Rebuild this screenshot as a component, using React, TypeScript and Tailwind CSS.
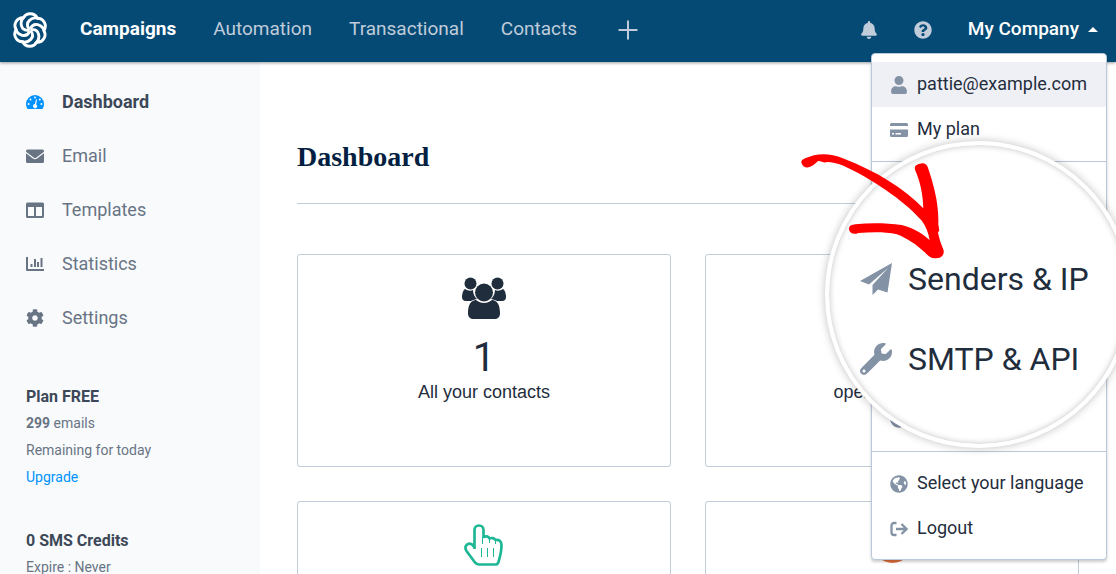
import type { ReactNode } from 'react';
import { FaBell, FaCog, FaGlobeAmericas, FaQuestionCircle, FaUser, FaWrench } from 'react-icons/fa';

const topLinks = ['Automation', 'Transactional', 'Contacts'];

function Logo() {
  return (
    <svg viewBox="-18 -18 36 36" className="size-9" fill="none" stroke="white" strokeWidth="2.9" strokeLinecap="round">
      {[0, 60, 120, 180, 240, 300].map((angle) => (
        <path key={angle} transform={`rotate(${angle})`} d="M-6.6 -12.2 A7.8 7.8 0 0 1 7.2 -12 C1.500 -13 -5.500 -7.500 -1.200 -1.500" />
      ))}
    </svg>
  );
}

function GaugeIcon() {
  return (
    <svg viewBox="0 0 18 18" className="size-[18px]">
      <path d="M9 2a9 9 0 0 1 9 9c0 1.600-.4 3-1 4.300-.3.500-.6.700-1 .7H2c-.4 0-.8-.2-1-.7A9.500 9.500 0 0 1 0 11a9 9 0 0 1 9-9z" fill="currentColor" />
      <g fill="#f9fafc">
        <circle cx="9" cy="4.500" r="1" />
        <circle cx="4.500" cy="6.500" r="1" />
        <circle cx="13.800" cy="6.500" r="1" />
        <circle cx="2.600" cy="11" r="1" />
        <circle cx="15.400" cy="11" r="1" />
        <path d="M10 6.200l1 .3-.8 4.900a2.100 2.100 0 1 1-1.300-.3z" />
      </g>
    </svg>
  );
}

function MailIcon() {
  return (
    <svg viewBox="0 0 18 18" className="size-[18px]" fill="currentColor">
      <path d="M1.500 2.500h15A1.500 1.500 0 0 1 18 4v.8l-7.600 5.700q-1.400 1-2.800 0L0 4.800V4a1.500 1.500 0 0 1 1.500-1.500z" />
      <path d="M0 6.200l6.900 5.200q2.100 1.500 4.200 0L18 6.200v8.300a1.500 1.500 0 0 1-1.500 1.500h-15A1.500 1.500 0 0 1 0 14.500z" />
    </svg>
  );
}

function ColumnsIcon() {
  return (
    <svg viewBox="0 0 18 18" className="size-[18px]" fill="currentColor">
      <path
        fillRule="evenodd"
        d="M1.500 1.500h15A1.500 1.500 0 0 1 18 3v12.500a1.500 1.500 0 0 1-1.500 1.500h-15A1.500 1.500 0 0 1 0 15.500V3a1.500 1.500 0 0 1 1.500-1.500zM2 6v9h6V6zM10 6v9h6V6z"
      />
    </svg>
  );
}

function ChartIcon() {
  return (
    <svg viewBox="0 0 18 18" className="size-[18px]" fill="currentColor">
      <path d="M0 2h2v12h16v2H1a1 1 0 0 1-1-1zM4.500 9h2v3h-2zM8 4h2v8H8zM11 7h2v5h-2zM14.500 3h2v9h-2z" />
    </svg>
  );
}

function CardIcon() {
  return (
    <svg viewBox="0 0 18 18" className="size-[18px]" fill="currentColor">
      <path d="M1.500 2h15A1.500 1.500 0 0 1 18 3.500V5H0V3.500A1.500 1.500 0 0 1 1.500 2z" />
      <path
        fillRule="evenodd"
        d="M0 8.500h18v6a1.500 1.500 0 0 1-1.500 1.500h-15A1.500 1.500 0 0 1 0 14.500zM2 12v1.500h2V12zM5.500 12v1.500H11V12z"
      />
    </svg>
  );
}

function LogoutIcon() {
  return (
    <svg viewBox="0 0 18 18" className="size-[18px]" fill="none" stroke="currentColor" strokeWidth="2.300">
      <path d="M6.500 3H4a2.500 2.500 0 0 0-2.500 2.500v7A2.500 2.500 0 0 0 4 15h2.500" />
      <path d="M6 9h10M11.500 4l5 5-5 5" />
    </svg>
  );
}

function PlaneIcon() {
  return (
    <svg viewBox="0 0 32 32" className="size-8" fill="currentColor">
      <path d="M32 0 27.500 29.500 18 26.500 12.500 32V22L28 5 9 21.500 0 18z" />
    </svg>
  );
}

function PeopleIcon() {
  return (
    <svg viewBox="0 0 44 42" className="h-[42px] w-11" fill="currentColor">
      <circle cx="8.500" cy="6.500" r="6" />
      <circle cx="35.500" cy="6.500" r="6" />
      <path d="M3 12c3 2 6 2 8 1 .3 5 2 7 4 9-3 .5-5 1.500-6 2H4c-3 0-4-2-4-4 0-3 1-7 3-8z" />
      <path d="M41 12c-3 2-6 2-8 1-.3 5-2 7-4 9 3 .5 5 1.500 6 2h5c3 0 4-2 4-4 0-3-1-7-3-8z" />
      <circle cx="22" cy="15.500" r="9" />
      <path d="M14 23c5 4 11 4 16 0 5 0 8 5 8 13 0 4-2 6-6 6H12c-4 0-6-2-6-6 0-8 3-13 8-13z" />
    </svg>
  );
}

function HandIcon() {
  return (
    <svg viewBox="0 0 40 42" className="h-[42px] w-10" fill="none" stroke="#1eb795" strokeWidth="2.700" strokeLinejoin="round">
      <path d="M10.500 25V6a4.500 4.500 0 0 1 9 0v7c2-1 5-1 6 1.500 2-1 5-.5 6 1.500 4-.5 6 1.500 6 5 0 7-1.500 12-3 17-.5 1.500-1.500 2.500-3 2.500H15c-2 0-3-1-4-2L2.500 27C-.5 22 4 18 8 20.500l2.500 3" />
      <path strokeWidth="1" d="M18.500 13v7M25.500 15v4M31.500 16v4M17.500 24v9M23.500 24v9M29.500 24v9" />
    </svg>
  );
}

function MenuItem({ icon, label, active }: { icon: ReactNode; label: string; active?: boolean }) {
  return (
    <a
      href="#"
      className={`flex h-[45px] items-center gap-[9px] px-[18px] text-[18px] whitespace-nowrap text-[#1f2d3d] ${active ? 'bg-[#eff0f6]' : ''}`}
    >
      <span className="text-[#8492a6]">{icon}</span>
      <span className="pb-[2px]">{label}</span>
    </a>
  );
}

function SideItem({ icon, label, active }: { icon: ReactNode; label: string; active?: boolean }) {
  return (
    <a href="#" className="flex h-[54px] items-center gap-[18px] text-[18px] text-[#687484]">
      <span className={active ? 'text-[#0092ff]' : ''}>{icon}</span>
      <span className={active ? 'pb-px font-bold text-[#3c4858]' : 'pb-px'}>{label}</span>
    </a>
  );
}

function StatCard({ children }: { children: ReactNode }) {
  return (
    <div className="flex h-[213px] flex-col items-center rounded-[3px] border border-[#c0ccda] pt-[22px] text-[#1f2d3d]">
      {children}
    </div>
  );
}

function Lens() {
  return (
    <div className="absolute top-[87px] -right-[26px] size-[307px] rounded-full border-4 border-white bg-white pt-[94px] pl-[31px] text-[32px] text-[#1f2d3d] shadow-[0_0_8px_rgba(0,0,0,0.25),inset_0_0_6px_rgba(0,0,0,0.25)]">
      <a href="#" className="flex h-20 items-center gap-4 whitespace-nowrap">
        <span className="text-[#8492a6]">
          <PlaneIcon />
        </span>
        Senders &amp; IP
      </a>
      <a href="#" className="flex h-20 items-center gap-4 whitespace-nowrap">
        <FaWrench className="size-8 text-[#8492a6]" />
        SMTP &amp; API
      </a>
    </div>
  );
}

function Arrow() {
  return (
    <svg viewBox="0 0 440 320" className="absolute top-[99px] right-[159px] h-[107px] w-[147px]" fill="#f00">
      <path d="M5 31C2 24 6 19 14 16 50 0 85 -2 130 16 230 55 310 104 369 165 368 125 360 85 345 52 340 38 350 33 363 31 373 29 380 34 383 44 400 95 416 150 414 213L417 232 413 238C417 260 424 275 430 292 432 306 422 316 404 315 390 315 382 306 374 298 350 274 320 255 290 243 250 234 210 237 175 239 160 245 150 240 147 230 145 218 154 214 166 213 210 208 260 209 304 215 340 224 370 243 388 260 385 240 377 220 364 202 310 140 210 75 130 38 110 30 95 28 82 27 72 31 66 25 54 24 45 34 34 42 22 43 14 43 8 39 5 31z" />
    </svg>
  );
}

function AccountMenu() {
  return (
    <div className="absolute top-[53px] right-[9px] z-20 w-[236px] rounded-[4px] border border-[#b9c8da] bg-white py-2 shadow-[0_2px_3px_rgba(0,0,0,0.2)]">
      <MenuItem icon={<FaUser className="size-[18px]" />} label="pattie@example.com" active />
      <MenuItem icon={<CardIcon />} label="My plan" />
      <div className="my-[9px] flex h-[291px] items-end border-y border-[#b9c8da] px-[18px] pb-[23px]">
        <FaQuestionCircle className="size-[18px] text-[#8492a6]" />
      </div>
      <MenuItem icon={<FaGlobeAmericas className="size-[18px]" />} label="Select your language" />
      <MenuItem icon={<LogoutIcon />} label="Logout" />
      <Lens />
      <Arrow />
    </div>
  );
}

export default function App() {
  return (
    <div className="relative flex h-screen flex-col overflow-hidden bg-white font-['Roboto',sans-serif]">
      <header className="relative z-10 flex h-[62px] shrink-0 items-center bg-[#044a75] pr-[18px] pb-[3px] pl-3 text-[19px] text-[#c0ccda] shadow-[0_1px_3px_rgba(0,0,0,0.4)]">
        <a href="#" aria-label="Home">
          <Logo />
        </a>
        <nav className="ml-8 flex items-center gap-[37px]">
          <a href="#" className="font-bold text-white">
            Campaigns
          </a>
          {topLinks.map((link) => (
            <a key={link} href="#">
              {link}
            </a>
          ))}
          <button type="button" aria-label="Add" className="px-1">
            <svg viewBox="0 0 20 20" className="size-5" stroke="currentColor" strokeWidth="2">
              <path d="M10 0.500v19M0.500 10h19" />
            </svg>
          </button>
        </nav>
        <div className="ml-auto flex items-center gap-9">
          <button type="button" aria-label="Notifications">
            <FaBell className="size-[18px]" />
          </button>
          <button type="button" aria-label="Help">
            <FaQuestionCircle className="size-[18px]" />
          </button>
          <button type="button" className="flex items-center gap-[9px] font-medium text-white">
            My Company
            <svg viewBox="0 0 10 5" className="h-[5px] w-[10px]" fill="currentColor">
              <path d="M5 0l5 5H0z" />
            </svg>
          </button>
        </div>
      </header>

      <div className="flex min-h-0 flex-1">
        <aside className="w-[260px] shrink-0 bg-[#f9fafc] px-[26px] pt-[13px]">
          <nav>
            <SideItem icon={<GaugeIcon />} label="Dashboard" active />
            <SideItem icon={<MailIcon />} label="Email" />
            <SideItem icon={<ColumnsIcon />} label="Templates" />
            <SideItem icon={<ChartIcon />} label="Statistics" />
            <SideItem icon={<FaCog className="size-[18px]" />} label="Settings" />
          </nav>
          <div className="mt-[38px] text-[14px] leading-[27px] text-[#687484]">
            <h2 className="text-[16px] font-bold text-[#3c4858]">Plan FREE</h2>
            <p>
              <strong>299</strong> emails
            </p>
            <p>Remaining for today</p>
            <a href="#" className="text-[#0092ff]">
              Upgrade
            </a>
          </div>
          <div className="mt-9 text-[14px] leading-[27px] text-[#687484]">
            <h2 className="text-[16px] font-bold text-[#3c4858]">0 SMS Credits</h2>
            <p>Expire : Never</p>
          </div>
        </aside>

        <main className="flex-1 px-[37px] pt-[77px]">
          <h1 className="border-b border-[#c0ccda] pb-7 font-['Liberation_Serif',serif] text-[28px] leading-9 font-bold text-[#041f42]">
            Dashboard
          </h1>
          <div className="mt-[50px] grid grid-cols-2 gap-[34px]">
            <StatCard>
              <PeopleIcon />
              <span className="mt-4 text-[40px] leading-[45px]">1</span>
              <span className="font-['Liberation_Sans',sans-serif] text-[18px] leading-6">All your contacts</span>
            </StatCard>
            <StatCard>
              <div className="h-[103px]" />
              <span className="font-['Liberation_Sans',sans-serif] text-[18px] leading-6">opened emails</span>
            </StatCard>
            <StatCard>
              <HandIcon />
            </StatCard>
            <StatCard>
              <div className="size-[39px] rounded-full bg-[#e0703c]" />
            </StatCard>
          </div>
        </main>
      </div>

      <AccountMenu />
    </div>
  );
}
